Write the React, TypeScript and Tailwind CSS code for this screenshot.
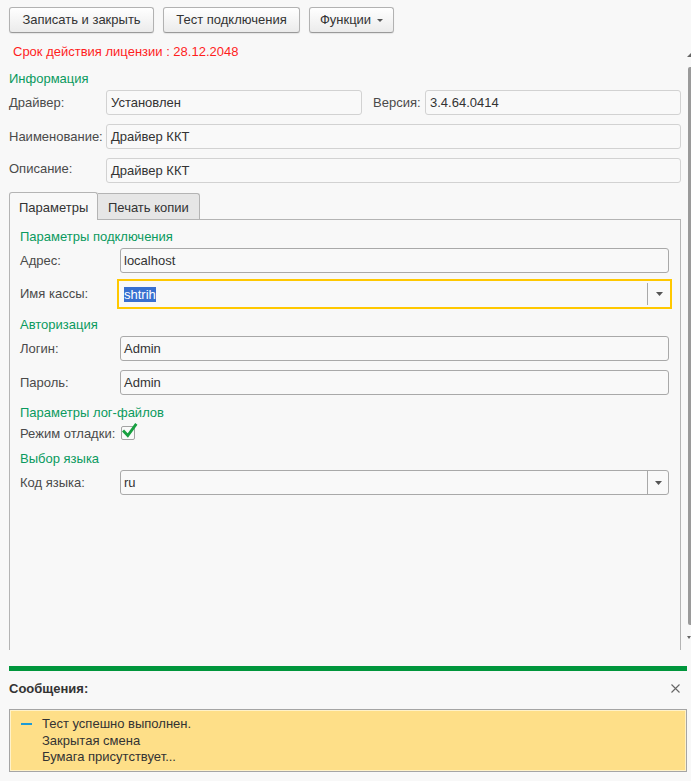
import React from "react";

const Arrow = () => (
  <svg width="7" height="4" viewBox="0 0 7 4" className="block">
    <path d="M0 0h7L3.5 4z" fill="#555" />
  </svg>
);

function Btn({ w, children }: { w: string; children: React.ReactNode }) {
  return (
    <div
      className={`${w} h-[26px] flex items-center justify-center rounded-[3px] border border-[#b2b2b2] border-b-[#9a9a9a] bg-gradient-to-b from-[#ffffff] to-[#ebebeb] shadow-[0_1px_1px_rgba(0,0,0,0.08)] text-[#333] text-[13px]`}
    >
      {children}
    </div>
  );
}

function InfoField({ w, children }: { w?: string; children: React.ReactNode }) {
  return (
    <div
      className={`${w ?? "flex-1"} h-[25px] flex items-center rounded-[3px] border border-[#d2d2d2] bg-[#f9f9f9] pl-[4px] text-[#333]`}
    >
      {children}
    </div>
  );
}

function Field({ children, dropdown }: { children: React.ReactNode; dropdown?: boolean }) {
  return (
    <div className="flex-1 h-[25px] flex items-stretch rounded-[3px] border border-[#a9a9a9] bg-[#f9f9f9] text-[#333]">
      <div className="flex-1 flex items-center pl-[3px]">{children}</div>
      {dropdown && (
        <div className="w-[21px] border-l border-[#a9a9a9] flex items-center justify-center">
          <Arrow />
        </div>
      )}
    </div>
  );
}

function Title({ children, cls }: { children: React.ReactNode; cls: string }) {
  return <div className={`${cls} leading-[15px] text-[#0a9a5e]`}>{children}</div>;
}

export default function App() {
  return (
    <div className="w-[691px] h-[781px] bg-[#f8f8f8] flex flex-col overflow-hidden font-['Liberation_Sans',Arial,sans-serif] text-[13px] text-[#4a4a4a]">
      {/* scroll area */}
      <div className="h-[650px] flex shrink-0">
        <div className="w-[687px] flex flex-col pl-[9px] pr-[6px]">
          <div className="flex gap-[9px] pt-[7px]">
            <Btn w="w-[145px]">Записать и закрыть</Btn>
            <Btn w="w-[137px]">Тест подключения</Btn>
            <Btn w="w-[85px]">
              <span>Функции</span>
              <span className="ml-[6px]">
                <svg width="6" height="3" viewBox="0 0 6 3" className="block">
                  <path d="M0 0h6L3 3z" fill="#555" />
                </svg>
              </span>
            </Btn>
          </div>

          <div className="mt-[11px] pl-[4px] leading-[15px] text-[#ff1e1e]">
            Срок действия лицензии : 28.12.2048
          </div>

          <Title cls="mt-[12px]">Информация</Title>

          <div className="mt-[4px] flex items-center">
            <div className="w-[97px]">Драйвер:</div>
            <InfoField w="w-[256px]">Установлен</InfoField>
            <div className="w-[63px] pl-[11px]">Версия:</div>
            <InfoField>3.4.64.0414</InfoField>
          </div>

          <div className="mt-[9px] flex items-center">
            <div className="w-[97px]">Наименование:</div>
            <InfoField>Драйвер ККТ</InfoField>
          </div>

          <div className="mt-[9px] flex items-start">
            <div className="w-[97px] pt-[1px]">Описание:</div>
            <InfoField>Драйвер ККТ</InfoField>
          </div>

          {/* tabs */}
          <div className="mt-[9px] flex items-end">
            <div className="relative z-10 w-[89px] h-[28px] -mb-[1px] border-x border-t border-[#b4b4b4] rounded-t-[3px] bg-[#f8f8f8] pl-[9px] pt-[5px] text-[#333]">
              Параметры
            </div>
            <div className="w-[102px] h-[26px] border-r border-t border-[#b4b4b4] rounded-tr-[3px] bg-[#e6e6e6] pl-[10px] pt-[4px] text-[#333]">
              Печать копии
            </div>
          </div>

          <div className="flex-1 flex flex-col border-x border-t border-[#b4b4b4] pl-[10px] pr-[11px] pt-[9px]">
            <Title cls="">Параметры подключения</Title>

            <div className="mt-[4px] flex items-center">
              <div className="w-[100px]">Адрес:</div>
              <Field>localhost</Field>
            </div>

            <div className="mt-[6px] flex items-center">
              <div className="w-[97px]">Имя кассы:</div>
              <div className="flex-1 -mr-[3px] h-[30px] flex items-stretch border-2 border-[#ffc800] bg-[#f9f9f9]">
                <div className="flex-1 flex items-center pl-[5px]">
                  <span className="bg-[#3870d0] text-white leading-[15px] px-0">shtrih</span>
                </div>
                <div className="w-[23px] my-[2px] border-l border-[#a9a9a9] flex items-center justify-center">
                  <Arrow />
                </div>
              </div>
            </div>

            <Title cls="mt-[8px]">Авторизация</Title>

            <div className="mt-[4px] flex items-center">
              <div className="w-[100px]">Логин:</div>
              <Field>Admin</Field>
            </div>

            <div className="mt-[9px] flex items-center">
              <div className="w-[100px]">Пароль:</div>
              <Field>Admin</Field>
            </div>

            <Title cls="mt-[10px]">Параметры лог-файлов</Title>

            <div className="mt-[6px] flex items-center h-[14px]">
              <div className="w-[101px] pt-[2px]">Режим отладки:</div>
              <div className="relative w-[14px] h-[14px] rounded-[2px] border border-[#a3a3a3] bg-[#fafafa]">
                <svg
                  width="17"
                  height="17"
                  viewBox="0 0 17 17"
                  className="absolute left-[-1px] top-[-5px]"
                >
                  <path
                    d="M3 9.5 L6.8 13.5 L14.5 3"
                    fill="none"
                    stroke="#17a040"
                    strokeWidth="2.8"
                    strokeLinecap="square"
                  />
                </svg>
              </div>
            </div>

            <Title cls="mt-[11px]">Выбор языка</Title>

            <div className="mt-[4px] flex items-center">
              <div className="w-[100px]">Код языка:</div>
              <Field dropdown>ru</Field>
            </div>
          </div>
        </div>

        {/* scrollbar */}
        <div className="w-[4px] flex flex-col items-end">
          <div className="mt-[53px] ml-[1px]">
            <svg width="4" height="4" viewBox="0 0 4 4" className="block">
              <path d="M0 4L4 0V4z" fill="#666" />
            </svg>
          </div>
          <div className="mt-[10px] w-[3px] h-[558px] rounded-l-[2px] bg-[#9a9a9a]" />
          <div className="mt-[11px]">
            <svg width="4" height="4" viewBox="0 0 4 4" className="block">
              <path d="M0 0h4L2 3z" fill="#666" />
            </svg>
          </div>
        </div>
      </div>

      {/* messages */}
      <div className="flex flex-col pl-[9px] pr-[4px] pt-[16px]">
        <div className="h-[5px] bg-[#00963c]" />
        <div className="mt-[10px] flex items-center justify-between pr-[7px]">
          <div className="leading-[15px] font-bold text-[#333]">Сообщения:</div>
          <svg width="9" height="9" viewBox="0 0 9 9" className="block">
            <path d="M0.5 0.5L8.5 8.5M8.5 0.5L0.5 8.5" stroke="#666" strokeWidth="1.1" />
          </svg>
        </div>
        <div className="mt-[13px] h-[63px] border border-[#a5a5a5]">
          <div className="h-full border border-[#fff2c8] bg-[#fedf88] pl-[10px] pt-[5px] flex text-[#333] leading-[16.5px]">
            <div className="w-[11px] h-[2px] mt-[7px] bg-[#1c9bd6]" />
            <div className="ml-[10px]">
              <div>Тест успешно выполнен.</div>
              <div>Закрытая смена</div>
              <div>Бумага присутствует...</div>
            </div>
          </div>
        </div>
      </div>
    </div>
  );
}
